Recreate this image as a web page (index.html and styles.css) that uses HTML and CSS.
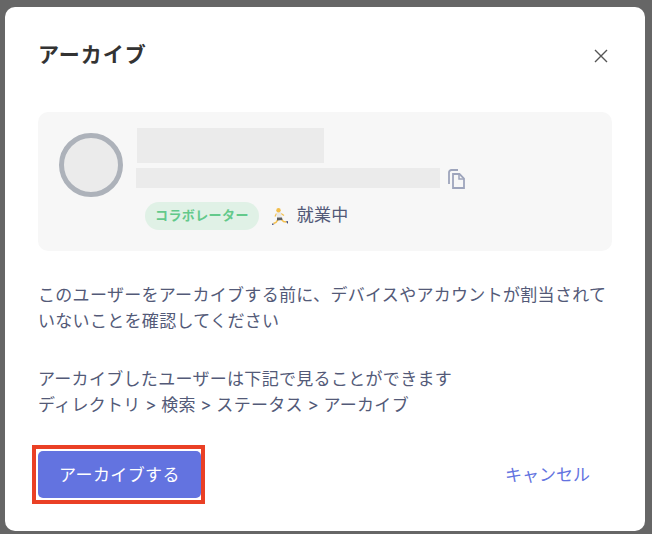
FILE: index.html
```html
<!DOCTYPE html>
<html lang="ja">
<head>
<meta charset="utf-8">
<title>アーカイブ</title>
<link rel="stylesheet" href="styles.css">
</head>
<body>
<main class="modal">
  <header class="modal-head">
    <h1 class="title">アーカイブ</h1>
    <svg class="close" width="14" height="14" viewBox="0 0 14 14" aria-label="閉じる"><path d="M1 1l12 12M13 1L1 13" fill="none" stroke="#555" stroke-width="1.4"/></svg>
  </header>
  <section class="card">
    <div class="avatar"></div>
    <div class="info">
      <div class="ph-name"></div>
      <div class="mail-row">
        <div class="ph-mail"></div>
        <svg class="copy" width="18" height="20" viewBox="0 0 18 20"><path d="M2 15V3.500A2.500 2.500 0 0 1 4.500 1H11" fill="none" stroke="#9ea5bc" stroke-width="1.800"/><path d="M6 5h6.500L17 9.500V19H6z" fill="none" stroke="#9ea5bc" stroke-width="1.800"/><path d="M12 5v5h5" fill="none" stroke="#9ea5bc" stroke-width="1.500"/></svg>
      </div>
      <div class="status-row">
        <span class="badge">コラボレーター</span>
        <svg class="runner" width="18" height="18" viewBox="0 0 18 18"><path d="M5.500 6.500L4 9.500" stroke="#f4c04e" stroke-width="1.300" fill="none"/><path d="M10 6.500L13 8.500" stroke="#f4c04e" stroke-width="1.300" fill="none"/><path d="M7 12.500L5 15.500 2.500 16.500" stroke="#f4c04e" stroke-width="1.500" fill="none"/><path d="M10 12l2.500 2.500 3 .500" stroke="#f4c04e" stroke-width="1.500" fill="none"/><path d="M5.500 5.500l4.500-.500.800 5.500H6z" fill="#e9e9e9"/><path d="M6 10.500h5l.500 2.500-5.500.500z" fill="#5c5c5c"/><circle cx="7.500" cy="3.200" r="2.200" fill="#f2bd4a"/><path d="M1 16.500l2.500.500-2.500 1z" fill="#2f3a70"/><path d="M15 14.500l1.800-.500.200 3z" fill="#2f3a70"/></svg>
        <span class="status">就業中</span>
      </div>
    </div>
  </section>
  <p class="text first">このユーザーをアーカイブする前に、デバイスやアカウントが割当されていないことを確認してください</p>
  <p class="text second">アーカイブしたユーザーは下記で見ることができます<br>ディレクトリ &gt; 検索 &gt; ステータス &gt; アーカイブ</p>
  <footer class="actions">
    <span class="highlight"><button class="primary">アーカイブする</button></span>
    <button class="cancel">キャンセル</button>
  </footer>
</main>
</body>
</html>
```
FILE: styles.css
```css
* { box-sizing: border-box; }
html, body { margin: 0; height: 534px; overflow: hidden; }
body {
  background: #666;
  font-family: "Inter", "Noto Sans CJK JP", sans-serif;
  padding: 7px 7px 3px 5px;
}
.modal {
  width: 640px;
  height: 524px;
  background: #fff;
  border-radius: 10px;
  padding: 0 33px;
  display: flex;
  flex-direction: column;
}
.modal-head {
  display: flex;
  justify-content: space-between;
  align-items: center;
  height: 105px;
  padding: 0 4px 0 0;
}
.title {
  margin: 0;
  font-size: 21px;
  letter-spacing: 1px;
  line-height: 30px;
  font-weight: 700;
  color: #333;
  position: relative;
  top: -5px;
}
.close { position: relative; top: -4px; }
.card {
  height: 139px;
  background: #f7f7f7;
  border-radius: 10px;
  display: flex;
  padding: 16px 21px;
  gap: 13px;
}
.avatar {
  width: 64px;
  height: 64px;
  margin-top: 5px;
  border-radius: 50%;
  background: #ebebeb;
  border: 5px solid #adb2ba;
  flex: none;
}
.info { display: flex; flex-direction: column; }
.ph-name { width: 187px; height: 35px; background: #ebebeb; margin-left: 1px; }
.mail-row { display: flex; align-items: center; margin-top: 5px; gap: 7px; height: 20px; }
.ph-mail { width: 304px; height: 20px; background: #ebebeb; }
.copy { margin-top: 1px; }
.status-row { display: flex; align-items: center; margin-top: 14px; margin-left: 9px; }
.badge {
  height: 28px;
  padding: 0 10px;
  border-radius: 14px;
  background: #e0f1e6;
  color: #63c98b;
  font-size: 13px;
  letter-spacing: 0.4px;
  font-weight: 700;
  line-height: 27px;
}
.runner { margin-left: 12px; margin-top: -1px; }
.status { margin-left: 8px; padding-bottom: 2px; font-size: 17px; letter-spacing: 0.2px; color: #535a78; line-height: 26px; }
.text {
  margin: 0;
  font-size: 17px;
  letter-spacing: 0.31px;
  line-height: 26px;
  color: #535a78;
}
.first { margin-top: 31px; }
.second { margin-top: 32px; word-spacing: -0.6px; }
.actions {
  display: flex;
  justify-content: space-between;
  align-items: center;
  margin: 27px 0 0 -6px;
}
.highlight {
  display: block;
  border: 4px solid #ea4025;
  padding: 2px 0 2px 2px;
  height: 59px;
}
.primary {
  width: 163px;
  height: 47px;
  border: 0;
  border-radius: 5px;
  padding: 0 0 2px;
  background: #6373e0;
  color: #fff;
  font: inherit;
  font-size: 17px;
  letter-spacing: 0.4px;
}
.cancel {
  border: 0;
  background: none;
  color: #6373e0;
  font: inherit;
  font-size: 17px;
  padding: 0 22px 2px 0;
}
```
